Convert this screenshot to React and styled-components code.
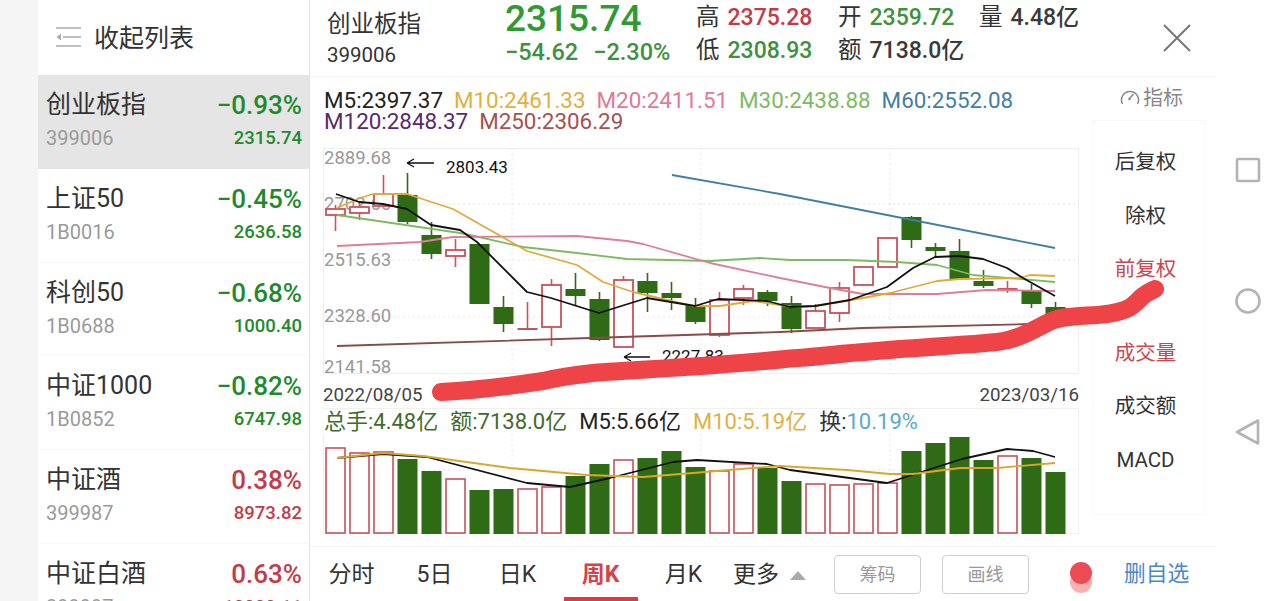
import React from "react";
import styled, { createGlobalStyle } from "styled-components";

const FONT = `Roboto, "Noto Sans CJK SC", sans-serif`;
const GREEN = "#2f6a15";
const RED = "#c9525c";
const UP = "#c23b48";
const DOWN = "#1f8a2c";

const GlobalStyle = createGlobalStyle`
  html, body {
    margin: 0;
    padding: 0;
    background: #fff;
    font-family: ${FONT};
  }
`;

const Page = styled.div`
  position: relative;
  display: flex;
  width: 1280px;
  height: 601px;
  overflow: hidden;
  background: #fff;
`;

const Gutter = styled.div`
  width: 38px;
  flex: none;
  background: #f5f5f5;
`;

const Sidebar = styled.aside`
  width: 272px;
  flex: none;
  box-sizing: border-box;
  border-right: 1px solid #e4e4e4;
  overflow: hidden;
`;

const SideHead = styled.div`
  display: flex;
  align-items: center;
  box-sizing: border-box;
  height: 75px;
  padding: 3px 0 0 18px;
  gap: 12px;
  color: #333;
  font-size: 25px;
  line-height: 36px;
`;

const CollapseIcon = styled.svg`
  margin-top: -4px;
  flex: none;
`;

const Row = styled.div`
  display: flex;
  justify-content: space-between;
  box-sizing: border-box;
  height: 93.8px;
  padding: 11px 7px 0 8px;
  background: ${(p) => (p.$active ? "#e5e5e5" : "#fff")};
  border-bottom: 1px solid ${(p) => (p.$active ? "#e5e5e5" : "#f7f7f7")};
`;

const RowCol = styled.div`
  display: flex;
  flex-direction: column;
  align-items: ${(p) => (p.$right ? "flex-end" : "flex-start")};
`;

const RowName = styled.div`
  font-size: 25px;
  line-height: 38px;
  color: #333;
  white-space: nowrap;
`;

const RowCode = styled.div`
  font-size: 20px;
  line-height: 28px;
  color: #9a9a9a;
`;

const RowPct = styled.div`
  font-size: 26px;
  line-height: 39px;
  font-weight: 500;
  color: ${(p) => (p.$up ? UP : DOWN)};
`;

const RowVal = styled.div`
  font-size: 18.5px;
  line-height: 27px;
  font-weight: 500;
  color: ${(p) => (p.$up ? UP : DOWN)};
`;

const Main = styled.main`
  width: 906px;
  flex: none;
  display: flex;
  flex-direction: column;
`;

const Header = styled.header`
  display: flex;
  align-items: stretch;
  height: 77px;
  box-sizing: border-box;
  padding-left: 17px;
  border-bottom: 1px solid #f3f3f3;
  position: relative;
`;

const NameBlock = styled.div`
  width: 178px;
  flex: none;
`;

const Title = styled.div`
  font-size: 23.5px;
  line-height: 30px;
  margin-top: 9px;
  color: #333;
`;

const Code = styled.div`
  font-size: 20.5px;
  line-height: 28px;
  margin-top: 2px;
  color: #333;
`;

const PriceBlock = styled.div`
  width: 191px;
  flex: none;
  color: #2f9a33;
`;

const Price = styled.div`
  font-size: 37px;
  font-weight: 500;
  line-height: 38px;
`;

const Change = styled.div`
  font-size: 23.5px;
  font-weight: 500;
  line-height: 30px;
  margin-top: -1px;
  display: flex;
  gap: 15px;
  color: #3f9140;
`;

const StatCol = styled.div`
  width: ${(p) => p.$w}px;
  flex: none;
  display: flex;
  flex-direction: column;
  padding-top: 1px;
`;

const Stat = styled.div`
  height: 33px;
  line-height: 33px;
  font-size: 23.5px;
  color: #333;
  white-space: nowrap;
  display: flex;
  gap: 8px;
`;

const StatVal = styled.span`
  font-weight: 500;
  font-size: 23px;
  color: ${(p) => p.$color || "#3a3a3a"};
`;

const CloseBtn = styled.svg`
  position: absolute;
  left: 853px;
  top: 24px;
  width: 28px;
  height: 28px;
`;

const Body = styled.div`
  display: flex;
  height: 469px;
`;

const ChartCol = styled.div`
  width: 782px;
  flex: none;
  box-sizing: border-box;
  padding: 13px 0 0 13px;
`;

const Legend = styled.div`
  display: flex;
  flex-wrap: wrap;
  column-gap: 11px;
  height: 42px;
  margin-bottom: 16px;
  padding-left: 1px;
  font-size: 22.4px;
  line-height: 21px;
  width: 740px;
`;

const Tag = styled.span`
  display: inline-block;
  color: ${(p) => p.$color};
  white-space: nowrap;
`;

const ChartSvg = styled.svg`
  display: block;
  width: 757px;
  font-family: ${FONT};
`;

const DateRow = styled.div`
  display: flex;
  justify-content: space-between;
  align-items: flex-end;
  width: 756px;
  height: 34px;
  font-size: 18.7px;
  line-height: 26px;
  color: #444;
`;

const VolLegend = styled.div`
  display: flex;
  column-gap: 12px;
  box-sizing: border-box;
  width: 756px;
  height: 26px;
  padding-left: 1px;
  font-size: 22px;
  line-height: 26px;
  border-top: 1px solid #f0f0f0;
  border-right: 1px solid #f0f0f0;
`;

const SidePane = styled.div`
  width: 124px;
  flex: none;
  padding-top: 10px;
`;

const IndicatorBtn = styled.div`
  display: flex;
  align-items: center;
  justify-content: flex-end;
  gap: 3px;
  height: 22px;
  width: 91px;
  margin-bottom: 11px;
  font-size: 20px;
  line-height: 22px;
  color: #888;
`;

const GaugeIcon = styled.svg`
  margin-top: -3px;
  flex: none;
`;

const Panel = styled.div`
  box-sizing: border-box;
  width: 113px;
  height: 395px;
  padding: 15px 6px 0 0;
  border: 1px solid #f8f8f8;
  display: flex;
  flex-direction: column;
  align-items: center;
`;

const PanelItem = styled.div`
  height: 53.5px;
  line-height: 53.5px;
  font-size: 20.5px;
  color: ${(p) => (p.$active ? "#c9474f" : "#333")};
  margin-top: ${(p) => (p.$gap ? "30px" : "0")};
`;

const Toolbar = styled.div`
  display: flex;
  align-items: center;
  height: 55px;
  border-top: 1px solid #f3f3f3;
  box-sizing: border-box;
`;

const Tab = styled.div`
  position: relative;
  width: ${(p) => p.$w || 83}px;
  flex: none;
  height: 54px;
  line-height: 56px;
  text-align: center;
  font-size: 23px;
  color: ${(p) => (p.$active ? "#d8404a" : "#333")};
  font-weight: ${(p) => (p.$active ? 700 : 400)};
  &::after {
    content: "";
    display: ${(p) => (p.$active ? "block" : "none")};
    position: absolute;
    left: 5px;
    right: 4px;
    bottom: 0;
    height: 4px;
    background: #e03b3b;
  }
`;

const MoreTab = styled.div`
  width: 85px;
  height: 54px;
  flex: none;
  display: flex;
  align-items: center;
  gap: 11px;
  padding: 2px 0 0 8px;
  box-sizing: border-box;
  font-size: 23px;
  line-height: 52px;
  color: #333;
`;

const ToolBtn = styled.div`
  box-sizing: border-box;
  width: 87px;
  height: 39px;
  margin-left: ${(p) => p.$ml}px;
  border: 1px solid #cfcfcf;
  border-radius: 4px;
  text-align: center;
  line-height: 37px;
  font-size: 18px;
  color: #999;
  flex: none;
`;

const Dot = styled.svg`
  width: 26px;
  height: 38px;
  margin-left: 39px;
  flex: none;
`;

const Unfollow = styled.div`
  margin-left: 30px;
  font-size: 21.7px;
  line-height: 56px;
  color: #4c87c9;
  white-space: nowrap;
`;

const Nav = styled.nav`
  width: 64px;
  flex: none;
  display: flex;
  flex-direction: column;
  align-items: center;
  padding-top: 156px;
  gap: 103px;
`;

const NavIcon = styled.svg`
  width: 28px;
  height: 28px;
  display: block;
`;

const Scribble = styled.svg`
  position: absolute;
  left: 0;
  top: 0;
  width: 1280px;
  height: 601px;
  pointer-events: none;
`;

const stocks = [
  { name: "创业板指", code: "399006", pct: "−0.93%", val: "2315.74", active: true },
  { name: "上证50", code: "1B0016", pct: "−0.45%", val: "2636.58" },
  { name: "科创50", code: "1B0688", pct: "−0.68%", val: "1000.40" },
  { name: "中证1000", code: "1B0852", pct: "−0.82%", val: "6747.98" },
  { name: "中证酒", code: "399987", pct: "0.38%", val: "8973.82", up: true },
  { name: "中证白酒", code: "399997", pct: "0.63%", val: "10000.11", up: true },
];

// [up, body top, body bottom, wick top, wick bottom], page y coordinates
const candles = [
  [1, 209, 215, 205, 231], [1, 207, 213, 203, 220], [1, 194, 206, 175, 206], [0, 195, 222, 173, 224],
  [0, 235, 254, 222, 259], [1, 250, 256, 239, 267], [0, 244, 304, 244, 304], [0, 307, 324, 296, 332],
  [1, 329, 329, 302, 329], [1, 285, 327, 279, 346], [0, 289, 296, 273, 306], [0, 299, 340, 292, 341],
  [1, 280, 347, 276, 347], [0, 281, 293, 273, 312], [0, 293, 298, 282, 310], [0, 305, 322, 298, 324],
  [1, 300, 335, 292, 337], [1, 289, 298, 285, 305], [0, 292, 301, 290, 306], [0, 303, 329, 296, 333],
  [1, 311, 328, 304, 328], [1, 288, 313, 282, 322], [1, 267, 285, 267, 286], [1, 238, 267, 237, 267],
  [0, 217, 240, 216, 248], [0, 247, 251, 243, 258], [0, 251, 279, 239, 279], [0, 281, 286, 270, 288],
  [1, 289, 289, 281, 293], [0, 290, 304, 284, 308], [0, 307, 325, 302, 325],
];

const volumes = [
  [1, 448], [1, 453], [1, 452], [0, 459], [0, 471], [1, 479], [0, 490], [0, 489], [1, 489], [1, 487], [0, 476],
  [0, 464], [1, 460], [0, 458], [0, 451], [0, 467], [1, 471], [1, 464], [0, 468], [0, 481], [1, 484], [1, 485],
  [1, 484], [1, 483], [0, 451], [0, 443], [0, 437], [0, 460], [1, 456], [0, 458], [0, 472],
];

const lines = [
  { color: "#3f7fa6", pts: "672,175 780,194 1055,248" },
  { color: "#8a4a48", pts: "337,346 590,338 780,332 863,328 1030,324" },
  { color: "#7dbb62", pts: "337,215 460,233 470,235 523,247 577,253 627,259 710,261 760,258 790,260 847,260 897,262 937,265 973,275 1055,282" },
  { color: "#dc7f98", pts: "337,246 420,242 453,237 577,236 627,241 643,244 710,263 780,278 830,288 863,294 937,294 987,290 1055,291" },
  { color: "#e0ab3c", pts: "337,208 360,198 373,194 407,194 453,209 490,230 527,251 577,265 603,282 633,292 663,299 693,306 720,306 753,301 793,307 815,306 840,302 863,298 890,293 937,281 960,279 1020,278 1030,275 1055,276" },
  { color: "#111", pts: "336,194 359,202 383,204 407,209 431,225 460,230 477,242 527,292 551,298 599,313 647,298 695,306 718,299 767,301 790,307 815,306 850,300 887,287 913,268 935,257 959,256 983,259 1007,268 1023,278 1055,296" },
];

const volLines = [
  { color: "#111", pts: "337,458 383,454 427,457 527,483 570,487 610,478 673,462 697,460 767,464 790,470 887,483 962,459 1007,449 1033,451 1055,457" },
  { color: "#d9a72f", pts: "337,458 383,453 423,456 510,468 587,475 643,477 693,473 753,468 780,466 847,470 890,474 913,474 960,468 997,468 1055,463" },
];

const axis = [
  ["2889.68", 164], ["2702.66", 210], ["2515.63", 266], ["2328.60", 322], ["2141.58", 373],
];

const candleX = (i) => 335.5 + i * 24;

function Candle({ c, i }) {
  const [up, top, bottom, wickTop, wickBottom] = c;
  const x = candleX(i);
  const color = up ? RED : GREEN;
  return (
    <g>
      <line x1={x} x2={x} y1={wickTop} y2={wickBottom} stroke={color} strokeWidth="1.6" />
      {top === bottom ? (
        <line x1={x - 10} x2={x + 10} y1={top} y2={top} stroke={color} strokeWidth="2" />
      ) : up ? (
        <rect x={x - 9.5} y={top} width="19" height={bottom - top} fill="#fff" stroke={color} strokeWidth="1.8" />
      ) : (
        <rect x={x - 10} y={top} width="20" height={bottom - top} fill={color} />
      )}
    </g>
  );
}

function Grid({ top, bottom, rows }) {
  return (
    <g stroke="#e6e6e6" strokeWidth="1">
      {[512, 701, 890].map((x) => (
        <line key={x} x1={x} x2={x} y1={top} y2={bottom} strokeDasharray="2 3" />
      ))}
      {rows.map((y) => (
        <line key={y} x1="323" x2="1079" y1={y} y2={y} strokeDasharray="2 3" />
      ))}
    </g>
  );
}

function PriceChart() {
  return (
    <ChartSvg viewBox="323 148 757 226" height="226">
      <rect x="323.5" y="148.5" width="755" height="225" fill="none" stroke="#eeeeee" />
      <Grid top={148} bottom={373} rows={[204, 260, 317]} />
      {axis.map(([t, y]) => (
        <text key={t} x="324" y={y} fontSize="18.5" fill="#999">{t}</text>
      ))}
      {candles.map((c, i) => (
        <Candle key={i} c={c} i={i} />
      ))}
      {lines.map((l) => (
        <polyline key={l.color} points={l.pts} fill="none" stroke={l.color} strokeWidth="1.8" strokeLinejoin="round" />
      ))}
      <path d="M407 163H434M407 163l7-4M407 163l7 4" fill="none" stroke="#111" strokeWidth="1.3" />
      <text x="446" y="173" fontSize="17" fill="#111">2803.43</text>
      <path d="M624 357H650M624 357l7-4M624 357l7 4" fill="none" stroke="#111" strokeWidth="1.3" />
      <text x="662" y="362" fontSize="17" fill="#111">2227.83</text>
    </ChartSvg>
  );
}

function VolumeChart() {
  return (
    <ChartSvg viewBox="323 434 757 100" height="100">
      <path d="M323.5 434V533.5H1078.5V434" fill="none" stroke="#f0f0f0" />
      <Grid top={434} bottom={533} rows={[470]} />
      {volumes.map(([up, top], i) =>
        up ? (
          <rect key={i} x={candleX(i) - 9.5} y={top} width="19" height={533 - top} fill="#fff" stroke={RED} strokeWidth="1.6" />
        ) : (
          <rect key={i} x={candleX(i) - 10} y={top} width="20" height={534 - top} fill={GREEN} />
        )
      )}
      {volLines.map((l) => (
        <polyline key={l.color} points={l.pts} fill="none" stroke={l.color} strokeWidth="1.8" strokeLinejoin="round" />
      ))}
    </ChartSvg>
  );
}

export default function App() {
  return (
    <Page>
      <GlobalStyle />
      <Gutter />
      <Sidebar>
        <SideHead>
          <CollapseIcon width="26" height="22" viewBox="0 0 26 22" fill="none" stroke="#aaa" strokeWidth="1.6">
            <path d="M0 2H25M7 11H25M0 20H25" />
            <path d="M0.5 11L5 7.5V14.5Z" fill="#aaa" stroke="none" />
          </CollapseIcon>
          收起列表
        </SideHead>
        {stocks.map((s) => (
          <Row key={s.code} $active={s.active}>
            <RowCol>
              <RowName>{s.name}</RowName>
              <RowCode>{s.code}</RowCode>
            </RowCol>
            <RowCol $right>
              <RowPct $up={s.up}>{s.pct}</RowPct>
              <RowVal $up={s.up}>{s.val}</RowVal>
            </RowCol>
          </Row>
        ))}
      </Sidebar>
      <Main>
        <Header>
          <NameBlock>
            <Title>创业板指</Title>
            <Code>399006</Code>
          </NameBlock>
          <PriceBlock>
            <Price>2315.74</Price>
            <Change>
              <span>−54.62</span>
              <span>−2.30%</span>
            </Change>
          </PriceBlock>
          <StatCol $w={142}>
            <Stat>高<StatVal $color="#c23b48">2375.28</StatVal></Stat>
            <Stat>低<StatVal $color="#3f9140">2308.93</StatVal></Stat>
          </StatCol>
          <StatCol $w={141}>
            <Stat>开<StatVal $color="#3f9140">2359.72</StatVal></Stat>
            <Stat>额<StatVal>7138.0亿</StatVal></Stat>
          </StatCol>
          <StatCol $w={110}>
            <Stat>量<StatVal>4.48亿</StatVal></Stat>
          </StatCol>
          <CloseBtn viewBox="0 0 28 28" fill="none" stroke="#777" strokeWidth="2">
            <path d="M1 1L27 27M27 1L1 27" />
          </CloseBtn>
        </Header>
        <Body>
          <ChartCol>
            <Legend>
              <Tag $color="#222">M5:2397.37</Tag>
              <Tag $color="#e0b040">M10:2461.33</Tag>
              <Tag $color="#e07a95">M20:2411.51</Tag>
              <Tag $color="#7dbb62">M30:2438.88</Tag>
              <Tag $color="#3f7fa6">M60:2552.08</Tag>
              <Tag $color="#5a2a6e">M120:2848.37</Tag>
              <Tag $color="#a85050">M250:2306.29</Tag>
            </Legend>
            <PriceChart />
            <DateRow>
              <span>2022/08/05</span>
              <span>2023/03/16</span>
            </DateRow>
            <VolLegend>
              <Tag $color="#3f6b2a">总手:4.48亿</Tag>
              <Tag $color="#3f6b2a">额:7138.0亿</Tag>
              <Tag $color="#222">M5:5.66亿</Tag>
              <Tag $color="#e0b040">M10:5.19亿</Tag>
              <span>
                <Tag $color="#333">换:</Tag>
                <Tag $color="#5aa8d0">10.19%</Tag>
              </span>
            </VolLegend>
            <VolumeChart />
          </ChartCol>
          <SidePane>
            <IndicatorBtn>
              <GaugeIcon width="20" height="16" viewBox="0 0 20 16" fill="none" stroke="#888" strokeWidth="1.5">
                <path d="M2.5 15A8.5 8.5 0 1 1 17.5 15" />
                <path d="M13.5 5L9.5 9.5" />
                <circle cx="9.5" cy="10" r="1.3" fill="#888" stroke="none" />
              </GaugeIcon>
              指标
            </IndicatorBtn>
            <Panel>
              <PanelItem>后复权</PanelItem>
              <PanelItem>除权</PanelItem>
              <PanelItem $active>前复权</PanelItem>
              <PanelItem $active $gap>成交量</PanelItem>
              <PanelItem>成交额</PanelItem>
              <PanelItem>MACD</PanelItem>
            </Panel>
          </SidePane>
        </Body>
        <Toolbar>
          <Tab>分时</Tab>
          <Tab>5日</Tab>
          <Tab>日K</Tab>
          <Tab $active>周K</Tab>
          <Tab>月K</Tab>
          <MoreTab>
            更多
            <svg width="16" height="9" viewBox="0 0 16 9">
              <path d="M8 0L16 9H0Z" fill="#aaa" />
            </svg>
          </MoreTab>
          <ToolBtn $ml={24}>筹码</ToolBtn>
          <ToolBtn $ml={21}>画线</ToolBtn>
          <Dot viewBox="0 0 26 38">
            <circle cx="13" cy="27" r="11" fill="#f9b0b0" />
            <circle cx="13" cy="18" r="11" fill="#ee4c55" />
          </Dot>
          <Unfollow>删自选</Unfollow>
        </Toolbar>
      </Main>
      <Nav>
        <NavIcon viewBox="0 0 28 28" fill="none" stroke="#b3b3b3" strokeWidth="2.6">
          <rect x="3" y="3" width="22" height="22" rx="1.5" />
        </NavIcon>
        <NavIcon viewBox="0 0 28 28" fill="none" stroke="#b3b3b3" strokeWidth="2.6">
          <circle cx="14" cy="14" r="11.5" />
        </NavIcon>
        <NavIcon viewBox="0 0 28 28" fill="none" stroke="#b3b3b3" strokeWidth="2.6">
          <path d="M24 2.5V25.5L3 14Z" strokeLinejoin="round" />
        </NavIcon>
      </Nav>
      <Scribble viewBox="0 0 1280 601">
        <path
          d="M441 392C480 390 510 386 543 381C560 377 575 375 593 373C650 369 720 366 785 359C810 357 825 356 840 354C860 352 880 351 900 349C930 347 965 345 997 342C1015 340 1030 332 1047 323C1055 318 1065 317 1080 316C1095 315 1115 315 1129 308C1136 304 1140 298 1143 296C1148 292 1151 291 1155 289"
          fill="none"
          stroke="#ee4347"
          strokeWidth="18"
          strokeLinecap="round"
          strokeLinejoin="round"
        />
      </Scribble>
    </Page>
  );
}
